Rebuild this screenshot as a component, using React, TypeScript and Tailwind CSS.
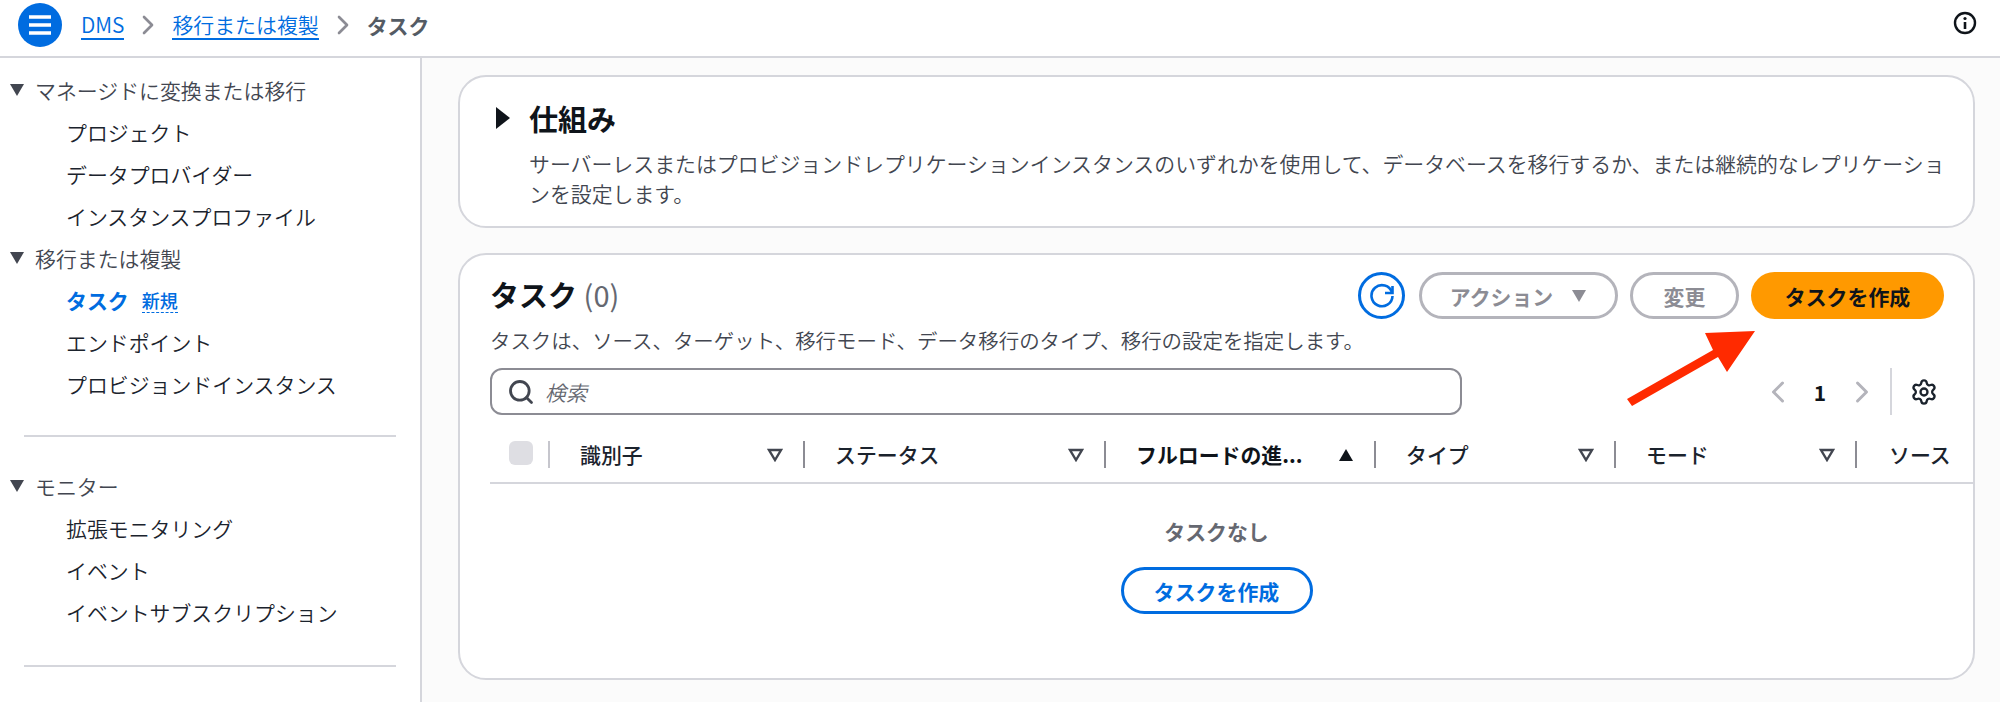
import { ChevronLeft, ChevronRight, Search, Settings } from 'lucide-react'

const navGroups = [
  {
    title: 'マネージドに変換または移行',
    items: ['プロジェクト', 'データプロバイダー', 'インスタンスプロファイル'],
  },
  {
    title: '移行または複製',
    items: ['タスク', 'エンドポイント', 'プロビジョンドインスタンス'],
  },
]

const columns = [
  { label: '識別子', width: 'w-[255px]' },
  { label: 'ステータス', width: 'w-[301px]' },
  { label: 'フルロードの進...', width: 'w-[270px]', sorted: true },
  { label: 'タイプ', width: 'w-[240px]' },
  { label: 'モード', width: 'w-[241px]' },
]

function Caret() {
  return (
    <svg width="16" height="14" viewBox="0 0 16 14" className="shrink-0">
      <path d="M1 1h14L8 13z" fill="#424650" />
    </svg>
  )
}

function NavItem({ label }: { label: string }) {
  const active = label === 'タスク'
  return (
    <div className="h-[42px] pl-[66px] flex items-center gap-[14px] text-[#1b232d]">
      <span className={active ? 'text-[#006ce0] font-bold' : ''}>{label}</span>
      {active && (
        <span className="-ml-[1px] text-[18px] leading-[24px] font-medium text-[#006ce0] border-b-[1.5px] border-dashed border-[#006ce0]">
          新規
        </span>
      )}
    </div>
  )
}

function NavGroup({ title, items }: { title: string; items: string[] }) {
  return (
    <div>
      <div className="h-[42px] pl-[9px] flex items-center gap-[10px] text-[#424650]">
        <Caret />
        <span>{title}</span>
      </div>
      {items.map((item) => (
        <NavItem key={item} label={item} />
      ))}
    </div>
  )
}

function Sidebar() {
  return (
    <aside className="w-[422px] shrink-0 bg-white border-r-2 border-[#d5d6dc] pt-[11px]">
      {navGroups.map((group) => (
        <NavGroup key={group.title} title={group.title} items={group.items} />
      ))}
      <div className="mx-[24px] mt-[30px] mb-[28px] border-t-2 border-[#d5d6dc]" />
      <NavGroup title="モニター" items={['拡張モニタリング', 'イベント', 'イベントサブスクリプション']} />
      <div className="mx-[24px] mt-[32px] border-t-2 border-[#d5d6dc]" />
    </aside>
  )
}

function TableHeader() {
  return (
    <div className="mt-[26px] h-[43px] flex items-start border-b-2 border-[#d5d6dc]">
      <div className="w-[58px] h-[27px] pl-[19px] flex items-start shrink-0">
        <div className="w-[24px] h-[24px] rounded-[6px] bg-[#dedee3]" />
      </div>
      {columns.map((col, i) => (
        <div key={col.label} className={`${col.width} h-[27px] shrink-0 flex items-center justify-between pr-[20px] pl-[30px] border-l-2 ${i === 0 ? 'border-[#c6c6cd]' : 'border-[#8c8c94]'}`}>
          <span className={`pb-[2px] ${col.sorted ? 'font-bold text-[#0f141a]' : 'font-medium text-[#1b232d]'}`}>{col.label}</span>
          {col.sorted ? (
            <svg width="16" height="14" viewBox="0 0 16 14">
              <path d="M1 13h14L8 1z" fill="#0f141a" />
            </svg>
          ) : (
            <svg width="16" height="14" viewBox="0 0 16 14">
              <path d="M2 2h12L8 12z" fill="none" stroke="#424650" strokeWidth="2.4" />
            </svg>
          )}
        </div>
      ))}
      <div className="h-[27px] pl-[32px] pb-[2px] flex items-center border-l-2 border-[#8c8c94] font-medium text-[#1b232d]">ソース</div>
    </div>
  )
}

export default function App() {
  return (
    <div
      className="relative h-[702px] w-[2000px] overflow-hidden bg-[#fbfbfb] flex flex-col text-[20.9px] leading-[30px]"
      style={{ fontFamily: '"Noto Sans CJK JP", "Noto Sans", sans-serif', fontWeight: 350 }}
    >
      {/* Breadcrumb bar */}
      <header className="h-[58px] shrink-0 bg-white border-b-2 border-[#d5d6dc] flex items-start pl-[18px] pr-[23px] pt-[3px]">
        <button className="w-[44px] h-[44px] rounded-full bg-[#006ce0] flex items-center justify-center">
          <svg width="22" height="20" viewBox="0 0 22 20">
            <path d="M0 2h22M0 10h22M0 18h22" stroke="#fff" strokeWidth="3.4" />
          </svg>
        </button>
        <nav className="ml-[19px] h-[44px] flex items-center text-[#006ce0]">
          <span className="border-b-2 border-[#006ce0] leading-[27px]">DMS</span>
          <ChevronRight className="mx-[8px] text-[#8c8c94]" size={32} strokeWidth={2} />
          <span className="border-b-2 border-[#006ce0] leading-[27px]">移行または複製</span>
          <ChevronRight className="mx-[8px] text-[#8c8c94]" size={32} strokeWidth={2} />
          <span className="font-bold text-[#545b64]">タスク</span>
        </nav>
        <svg className="ml-auto mt-[8px]" width="24" height="24" viewBox="0 0 24 24" fill="none">
          <circle cx="12" cy="12" r="10" stroke="#0f141a" strokeWidth="2.4" />
          <path d="M12 11v7" stroke="#0f141a" strokeWidth="2.6" />
          <circle cx="12" cy="7.5" r="1.6" fill="#0f141a" />
        </svg>
      </header>

      <div className="flex-1 flex min-h-0">
        <Sidebar />

        <main className="flex-1 pt-[17px] pl-[36px] pr-[25px]">
          {/* How it works */}
          <section className="h-[153px] bg-white border-2 border-[#d5d6dc] rounded-[28px] pl-[35px] pr-[20px] pt-[21px]">
            <div className="h-[40px] flex items-center gap-[18px]">
              <svg width="16" height="22" viewBox="0 0 16 22">
                <path d="M1 0l14 11L1 22z" fill="#0f141a" />
              </svg>
              <h2 className="text-[29px] font-bold text-[#0f141a]">仕組み</h2>
            </div>
            <p className="mt-[10px] pl-[34px] text-[#424650]">
              サーバーレスまたはプロビジョンドレプリケーションインスタンスのいずれかを使用して、データベースを移行するか、または継続的なレプリケーションを設定します。
            </p>
          </section>

          {/* Tasks */}
          <section className="mt-[25px] h-[427px] bg-white border-2 border-[#d5d6dc] rounded-[28px] pl-[30px] pt-[17px]">
            <div className="h-[47px] pr-[29px] flex items-center">
              <h2 className="pb-[3px] text-[29px] font-bold text-[#0f141a]">
                タスク <span className="font-normal text-[#656871]">(0)</span>
              </h2>
              <button className="ml-auto w-[47px] h-[47px] rounded-full border-[3px] border-[#006ce0] flex items-center justify-center">
                <svg width="26" height="26" viewBox="0 0 26 26" fill="none" stroke="#006ce0" strokeWidth="2.6">
                  <path d="M23 9.5A10.5 10.5 0 1 0 23.5 13" />
                  <path d="M23.5 3v7h-7.5" />
                </svg>
              </button>
              <button className="ml-[14px] w-[199px] h-[47px] rounded-full border-[3px] border-[#b4b4bb] font-bold text-[#8c8c94] flex items-center justify-center gap-[18px]">
                アクション
                <svg width="16" height="14" viewBox="0 0 16 14">
                  <path d="M1 1h14L8 13z" fill="#8c8c94" />
                </svg>
              </button>
              <button className="ml-[12px] w-[109px] h-[47px] rounded-full border-[3px] border-[#b4b4bb] font-bold text-[#8c8c94]">
                変更
              </button>
              <button className="ml-[12px] w-[193px] h-[47px] rounded-full bg-[#ff9900] font-bold text-[#0f141a]">
                タスクを作成
              </button>
            </div>
            <p className="mt-[6px] text-[20.45px] text-[#424650]">
              タスクは、ソース、ターゲット、移行モード、データ移行のタイプ、移行の設定を指定します。
            </p>

            <div className="mt-[13px] h-[47px] flex items-center">
              <div className="w-[972px] h-[47px] rounded-[12px] border-2 border-[#8c8c94] flex items-center pl-[15px] gap-[10px] bg-white">
                <Search size={28} strokeWidth={2.4} className="text-[#424650]" />
                <span className="italic text-[#656871]">検索</span>
              </div>
              <div className="ml-auto pr-[35px] flex items-center text-[#b4b4bb]">
                <ChevronLeft size={36} strokeWidth={2} />
                <span className="mx-[18px] font-bold text-[#0f141a]">1</span>
                <ChevronRight size={36} strokeWidth={2} />
                <div className="ml-[10px] mr-[18px] w-[2px] h-[47px] bg-[#d5d6dc]" />
                <Settings size={28} strokeWidth={2} className="text-[#1b232d]" />
              </div>
            </div>

            <TableHeader />

            <div className="flex flex-col items-center pr-[30px]">
              <div className="mt-[32px] font-bold text-[#656871]">タスクなし</div>
              <button className="mt-[21px] w-[192px] h-[47px] rounded-full border-[3px] border-[#006ce0] font-bold text-[#006ce0]">
                タスクを作成
              </button>
            </div>
          </section>
        </main>
      </div>

      {/* Red annotation arrow */}
      <svg className="absolute left-[1620px] top-[325px]" width="145" height="90" viewBox="1620 325 145 90">
        <path d="M1627 399L1713 350L1705 333L1755 331L1727 372L1718 357L1632 406z" fill="#ff2a00" />
      </svg>
    </div>
  )
}
